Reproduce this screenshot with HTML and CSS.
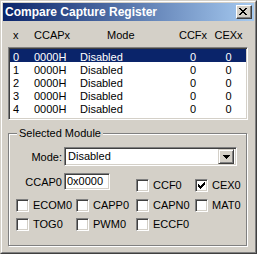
FILE: index.html
```html
<!DOCTYPE html>
<html>
<head>
<meta charset="utf-8">
<link rel="stylesheet" href="styles.css">
</head>
<body>
<div class="window">
  <div class="frame">
    <div class="titlebar">
      <span class="title">Compare Capture Register</span>
      <span class="close"><svg width="8" height="7" viewBox="0 0 8 7"><path d="M0 0h2v1H0z M6 0h2v1H6z M1 1h2v1H1z M5 1h2v1H5z M2 2h4v1H2z M3 3h2v1H3z M2 4h4v1H2z M1 5h2v1H1z M5 5h2v1H5z M0 6h2v1H0z M6 6h2v1H6z" fill="#000"/></svg></span>
    </div>
    <div class="content">
      <div class="cols head">
        <span>x</span><span>CCAPx</span><span class="mode-h">Mode</span><span class="ctr">CCFx</span><span class="ctr">CEXx</span>
      </div>
      <div class="list">
        <div class="cols row sel"><span>0</span><span>0000H</span><span>Disabled</span><span class="ctr">0</span><span class="ctr">0</span></div>
        <div class="cols row"><span>1</span><span>0000H</span><span>Disabled</span><span class="ctr">0</span><span class="ctr">0</span></div>
        <div class="cols row"><span>2</span><span>0000H</span><span>Disabled</span><span class="ctr">0</span><span class="ctr">0</span></div>
        <div class="cols row"><span>3</span><span>0000H</span><span>Disabled</span><span class="ctr">0</span><span class="ctr">0</span></div>
        <div class="cols row"><span>4</span><span>0000H</span><span>Disabled</span><span class="ctr">0</span><span class="ctr">0</span></div>
      </div>
      <div class="group">
        <span class="group-title">Selected Module</span>
        <div class="mode-row">
          <span class="lbl">Mode:</span>
          <div class="select">
            <span class="sel-text">Disabled</span>
            <span class="drop"><svg width="7" height="4" viewBox="0 0 7 4"><path d="M0 0h7v1H0z M1 1h5v1H1z M2 2h3v1H2z M3 3h1v1H3z" fill="#000"/></svg></span>
          </div>
        </div>
        <div class="checks">
          <div class="ccap"><span class="lbl">CCAP0</span><span class="input">0x0000</span></div>
          <span class="chk top c3"><span class="box"></span>CCF0</span>
          <span class="chk top"><span class="box"><svg width="7" height="7" viewBox="0 0 7 7"><path d="M0 2h1v3H0z M1 3h1v3H1z M2 4h1v3H2z M3 3h1v3H3z M4 2h1v3H4z M5 1h1v3H5z M6 0h1v3H6z" fill="#000"/></svg></span>CEX0</span>
          <span class="chk first"><span class="box"></span>ECOM0</span>
          <span class="chk"><span class="box"></span>CAPP0</span>
          <span class="chk"><span class="box"></span>CAPN0</span>
          <span class="chk"><span class="box"></span>MAT0</span>
          <span class="chk first"><span class="box"></span>TOG0</span>
          <span class="chk"><span class="box"></span>PWM0</span>
          <span class="chk"><span class="box"></span>ECCF0</span>
        </div>
      </div>
    </div>
  </div>
</div>
</body>
</html>
```
FILE: styles.css
```css
* { box-sizing: border-box; margin: 0; padding: 0; }
body {
  margin: 0;
  font: 11px "Liberation Sans", Arial, sans-serif;
  color: #000;
  background: #D4D0C8;
}
.window {
  width: 257px;
  height: 254px;
  border: 1px solid;
  border-color: #D4D0C8 #404040 #404040 #D4D0C8;
  background: #D4D0C8;
}
.frame {
  height: 100%;
  border: 1px solid;
  border-color: #fff #808080 #808080 #fff;
  padding: 1px;
}
.titlebar {
  height: 18px;
  background: linear-gradient(to right, #0A246A, #A6CAF0);
  display: flex;
  align-items: center;
  justify-content: space-between;
  padding: 0 2px 0 2px;
}
.title {
  color: #fff;
  font-weight: bold;
  font-size: 12px;
  line-height: 18px;
}
.close {
  display: block;
  width: 16px;
  height: 14px;
  background: #D4D0C8;
  border: 1px solid;
  border-color: #fff #404040 #404040 #fff;
  box-shadow: inset -1px -1px #808080;
  padding: 2px 0 0 2px;
}
.close svg { display: block; }
.content {
  padding: 0 6px 0 5px;
}
.cols {
  display: grid;
  grid-template-columns: 21px 46px 95px 36px 35px;
  height: 13px;
  line-height: 13px;
  white-space: nowrap;
}
.ctr { text-align: center; }
.head {
  margin-top: 8px;
  padding-left: 5px;
}
.mode-h { padding-left: 27px; }
.list {
  margin-top: 5px;
  height: 73px;
  background: #fff;
  border: 1px solid;
  border-color: #808080 #fff #fff #808080;
  box-shadow: inset 1px 1px #404040, inset -1px -1px #D4D0C8;
  padding: 1px;
}
.row {
  padding-left: 3px;
}
.row span { position: relative; top: 2px; }
.sel {
  background: #0A246A;
  color: #fff;
}
.group {
  position: relative;
  margin-top: 13px;
  width: 239px;
  border: 1px solid #808080;
  box-shadow: inset 1px 1px #fff, 1px 1px #fff;
  padding: 13px 0 14px 0;
}
.group-title {
  position: absolute;
  top: -7px;
  left: 8px;
  padding: 0 2px;
  line-height: 13px;
  background: #D4D0C8;
}
.mode-row {
  display: flex;
  align-items: center;
  gap: 2px;
}
.lbl {
  width: 53px;
  text-align: right;
  flex: none;
}
.select {
  width: 173px;
  height: 19px;
  background: #fff;
  border: 1px solid;
  border-color: #808080 #fff #fff #808080;
  box-shadow: inset 1px 1px #404040, inset -1px -1px #D4D0C8;
  padding: 2px;
  display: flex;
  align-items: center;
  justify-content: space-between;
}
.sel-text { padding-left: 1px; line-height: 13px; }
.drop {
  width: 16px;
  height: 15px;
  background: #D4D0C8;
  border: 1px solid;
  border-color: #D4D0C8 #404040 #404040 #D4D0C8;
  box-shadow: inset 1px 1px #fff, inset -1px -1px #808080;
  display: flex;
  align-items: center;
  justify-content: center;
}
.drop svg { display: block; }
.checks {
  margin-top: 7px;
  display: grid;
  grid-template-columns: 67px 60px 59px 1fr;
  grid-template-rows: 19px 20px 19px;
}
.ccap {
  grid-column: 1 / 3;
  display: flex;
  align-items: center;
  gap: 2px;
  height: 17px;
}
.input {
  width: 46px;
  height: 17px;
  background: #fff;
  border: 1px solid;
  border-color: #808080 #fff #fff #808080;
  box-shadow: inset 1px 1px #404040, inset -1px -1px #D4D0C8;
  padding: 1px 2px;
  line-height: 13px;
}
.chk {
  display: flex;
  align-items: center;
  gap: 4px;
  height: 13px;
  line-height: 13px;
  align-self: end;
  white-space: nowrap;
}
.chk.c3 { grid-column: 3; }
.chk.first { padding-left: 7px; }
.box {
  width: 13px;
  height: 13px;
  flex: none;
  background: #fff;
  border: 1px solid;
  border-color: #808080 #fff #fff #808080;
  box-shadow: inset 1px 1px #404040, inset -1px -1px #D4D0C8;
  padding: 2px 0 0 2px;
}
.box svg { display: block; }
```
